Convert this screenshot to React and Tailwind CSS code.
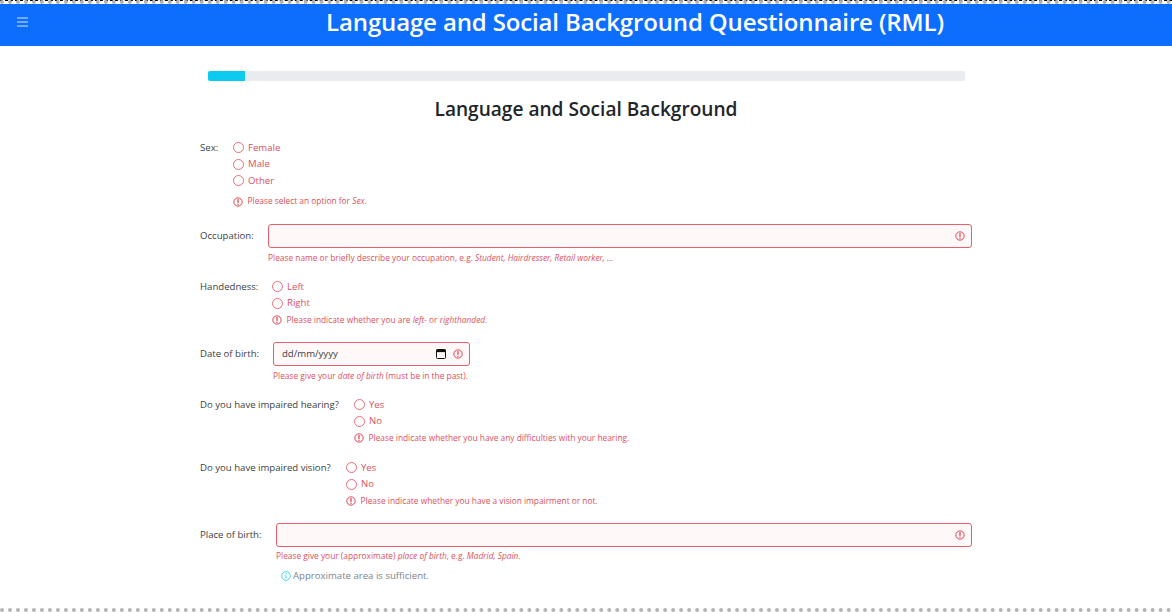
const FONT = "font-['Open_Sans','Noto_Sans',sans-serif]";

function Alert({ className = "", size = 10 }) {
  return (
    <svg width={size} height={size} viewBox="0 0 12 12" fill="none" className={className}>
      <circle cx="6" cy="6" r="5" stroke="#dc3545" strokeWidth="1.1" />
      <path d="M6 3v3.5" stroke="#dc3545" strokeWidth="1.4" strokeLinecap="round" />
      <circle cx="6" cy="8.7" r="0.8" fill="#dc3545" />
    </svg>
  );
}

function Radio({ label }) {
  return (
    <div className="flex items-center h-[16.5px] text-[#e04f5d]">
      <span className="w-[11px] h-[11px] rounded-full border border-[#e8707c] bg-white mr-[4.5px] ml-[0.5px] shrink-0" />
      <span className="text-[9.6px] leading-none">{label}</span>
    </div>
  );
}

function RadioError({ children }) {
  return (
    <div className="flex items-center text-[#e04f5d] text-[8.35px] leading-none h-[14px]">
      <Alert className="ml-[0.5px] mr-[5px] shrink-0" />
      <span>{children}</span>
    </div>
  );
}

function RadioRow({ label, options, error, labelWidth, gapTop = 0, className = "", labelLeading = "leading-[17px]" }) {
  return (
    <div className={`flex ${className}`}>
      <div className={`text-[9.6px] text-[#3a3f44] shrink-0 ${labelLeading} ${labelWidth}`}>{label}</div>
      <div>
        {options.map((o) => (
          <Radio key={o} label={o} />
        ))}
        <div className={gapTop ? "mt-[5.5px]" : "mt-[1.5px]"}>
          <RadioError>{error}</RadioError>
        </div>
      </div>
    </div>
  );
}

function TextRow({ label, labelWidth, error, className = "", errorGap = "mt-[6px]" }) {
  return (
    <div className={`flex ${className}`}>
      <div className={`text-[9.6px] leading-[24px] text-[#3a3f44] shrink-0 ${labelWidth}`}>{label}</div>
      <div className="flex-1">
        <div className="h-[24px] rounded-[3px] border border-[#e4606d] bg-[#fff8f8] flex items-center justify-end pr-[6px]">
          <Alert />
        </div>
        <div className={`text-[8.35px] leading-none text-[#e04f5d] ${errorGap}`}>{error}</div>
      </div>
    </div>
  );
}

export default function App() {
  return (
    <div className={`${FONT} relative h-[612px] w-[1172px] overflow-hidden bg-white`}>
      <div className="relative h-[4px] bg-white">
        <div className="absolute inset-x-0 top-0 border-t border-dashed border-black" />
        <div className="absolute inset-x-0 top-0 border-t-[4px] border-dotted border-[#b4b4b4]" />
      </div>
      <header className="relative h-[42px] bg-[#0d6efd] flex items-start justify-center pl-[98px]">
        <svg width="11" height="10" viewBox="0 0 11 10" className="absolute left-[17px] top-[13px]" fill="none" stroke="#d7e6ff" strokeWidth="1">
          <path d="M0 1h11M0 5h11M0 9h11" />
        </svg>
        <h1 className="text-white text-[24px] font-semibold leading-none tracking-[-0.14px] mt-[6px]">
          Language and Social Background Questionnaire (RML)
        </h1>
      </header>

      <main className="w-[772px] ml-[200px]">
        <div className="ml-[8px] mt-[25px] w-[757px] h-[10px] rounded-[2px] bg-[#e9ecef] overflow-hidden">
          <div className="h-full w-[37px] bg-[#0dcaf0]" />
        </div>
        <h2 className="text-[19.1px] leading-none font-semibold text-[#212529] text-center mt-[19px] h-[19px]">
          Language and Social Background
        </h2>

        <RadioRow className="mt-[20.5px]" labelLeading="leading-[15.5px]" label="Sex:" labelWidth="w-[32px]" options={["Female", "Male", "Other"]} gapTop={1} error={<>Please select an option for <i>Sex</i>.</>} />

        <TextRow className="mt-[15.5px]" label="Occupation:" labelWidth="w-[68px]" error={<>Please name or briefly describe your occupation, e.g. <i>Student, Hairdresser, Retail worker, ...</i></>} />

        <RadioRow className="mt-[16px]" label="Handedness:" labelWidth="w-[71px]" options={["Left", "Right"]} error={<>Please indicate whether you are <i>left-</i> or <i>righthanded</i>.</>} />

        <div className="flex mt-[15.5px]">
          <div className="text-[9.6px] leading-[24px] text-[#3a3f44] w-[73px] shrink-0">Date of birth:</div>
          <div>
            <div className="w-[197px] h-[24px] rounded-[3px] border border-[#e4606d] bg-[#fff8f8] flex items-center pl-[8px] pr-[6px]">
              <span className="text-[9.6px] text-[#3a3f44] flex-1">dd/mm/yyyy</span>
              <svg width="10" height="10" viewBox="0 0 10 10" className="mr-[7px]">
                <rect x="0.5" y="0.5" width="9" height="9" rx="1" fill="none" stroke="#111" />
                <rect x="0.5" y="0.5" width="9" height="2.6" fill="#111" />
              </svg>
              <Alert />
            </div>
            <div className="text-[8.35px] leading-none text-[#e04f5d] mt-[6px]">
              Please give your <i>date of birth</i> (must be in the past).
            </div>
          </div>
        </div>

        <RadioRow className="mt-[15.75px]" label="Do you have impaired hearing?" labelWidth="w-[153px]" options={["Yes", "No"]} error="Please indicate whether you have any difficulties with your hearing." />

        <RadioRow className="mt-[14.5px]" label="Do you have impaired vision?" labelWidth="w-[145px]" options={["Yes", "No"]} error="Please indicate whether you have a vision impairment or not." />

        <TextRow className="mt-[15.25px]" errorGap="mt-[5.25px]" label="Place of birth:" labelWidth="w-[76px]" error={<>Please give your (approximate) <i>place of birth</i>, e.g. <i>Madrid, Spain</i>.</>} />

        <div className="flex items-center ml-[81px] mt-[10px] text-[9.6px] leading-none text-[#7c858d]">
          <svg width="10" height="10" viewBox="0 0 12 12" fill="none" className="mr-[2px]">
            <circle cx="6" cy="6" r="5.2" stroke="#0dcaf0" strokeWidth="0.9" />
            <path d="M6 5.2v3.5" stroke="#0dcaf0" strokeWidth="1" />
            <circle cx="6" cy="3.4" r="0.7" fill="#0dcaf0" />
          </svg>
          Approximate area is sufficient.
        </div>
      </main>

      <div className="absolute left-0 right-0 bottom-0 border-t-[4px] border-dotted border-[#b4b4b4]" />
    </div>
  );
}
